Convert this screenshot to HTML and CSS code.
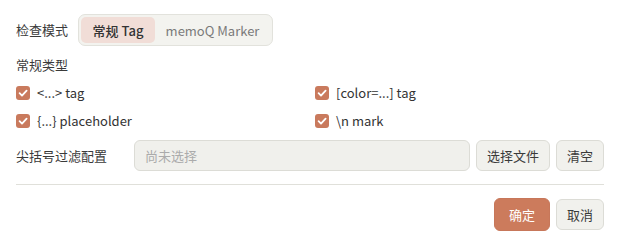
FILE: index.html
```html
<!DOCTYPE html>
<html lang="zh">
<head>
<meta charset="utf-8">
<link rel="stylesheet" href="styles.css">
</head>
<body>
<div class="dialog">
  <div class="mode-row">
    <span class="label">检查模式</span>
    <div class="segmented">
      <button class="seg active">常规 Tag</button>
      <button class="seg">memoQ Marker</button>
    </div>
  </div>
  <div class="section-title">常规类型</div>
  <div class="checks">
    <label class="check"><span class="box"><svg viewBox="0 0 14 14" width="14" height="14"><path d="M3.6 7.2 L6 9.6 L10.6 4.6" fill="none" stroke="#fff" stroke-width="1.8" stroke-linecap="round" stroke-linejoin="round"/></svg></span>&lt;...&gt; tag</label>
    <label class="check"><span class="box"><svg viewBox="0 0 14 14" width="14" height="14"><path d="M3.6 7.2 L6 9.6 L10.6 4.6" fill="none" stroke="#fff" stroke-width="1.8" stroke-linecap="round" stroke-linejoin="round"/></svg></span>[color=...] tag</label>
    <label class="check"><span class="box"><svg viewBox="0 0 14 14" width="14" height="14"><path d="M3.6 7.2 L6 9.6 L10.6 4.6" fill="none" stroke="#fff" stroke-width="1.8" stroke-linecap="round" stroke-linejoin="round"/></svg></span>{...} placeholder</label>
    <label class="check"><span class="box"><svg viewBox="0 0 14 14" width="14" height="14"><path d="M3.6 7.2 L6 9.6 L10.6 4.6" fill="none" stroke="#fff" stroke-width="1.8" stroke-linecap="round" stroke-linejoin="round"/></svg></span>\n mark</label>
  </div>
  <div class="file-row">
    <span class="label wide">尖括号过滤配置</span>
    <div class="input">尚未选择</div>
    <button class="btn">选择文件</button>
    <button class="btn">清空</button>
  </div>
  <div class="divider"></div>
  <div class="actions">
    <button class="btn primary">确定</button>
    <button class="btn">取消</button>
  </div>
</div>
</body>
</html>
```
FILE: styles.css
```css
* { box-sizing: border-box; }
html, body { margin: 0; background: #ffffff; }
body {
  font-family: "Noto Sans CJK SC", "Noto Sans", sans-serif;
  font-size: 13px;
  color: #3a3a3a;
}
.dialog {
  padding: 14px 16px 0 16px;
  display: flex;
  flex-direction: column;
}
.mode-row {
  display: flex;
  align-items: center;
  height: 32px;
}
.label {
  width: 62px;
  line-height: 20px;
}
.label.wide { width: 112px; }
.segmented {
  display: flex;
  padding: 2px;
  background: #f3f3ef;
  border: 1px solid #e2e2dc;
  border-radius: 7px;
  height: 32px;
  width: 195px;
}
.seg {
  font: inherit;
  border: none;
  background: transparent;
  color: #7a7a7a;
  border-radius: 5px;
  height: 100%;
  cursor: pointer;
}
.seg.active {
  background: #f1ddd7;
  color: #333;
  font-weight: 500;
  width: 74px;
  padding: 0;
}
.seg:not(.active) { flex: 1; padding: 0; }
.section-title {
  margin-top: 9px;
  line-height: 20px;
}
.checks {
  margin-top: 8px;
  display: grid;
  grid-template-columns: 1fr 1fr;
  column-gap: 10px;
  row-gap: 8px;
}
.check {
  display: flex;
  align-items: center;
  gap: 7px;
  line-height: 20px;
  color: #333;
}
.box {
  width: 14px;
  height: 14px;
  border-radius: 3px;
  background: #c97a5d;
  display: flex;
}
.file-row {
  margin-top: 9px;
  display: flex;
  align-items: center;
  gap: 6px;
}
.input {
  flex: 1;
  height: 31px;
  background: #f0f0ec;
  border: 1px solid #dcdcd6;
  border-radius: 6px;
  padding: 0 10px;
  line-height: 29px;
  color: #ababab;
}
.btn {
  font: inherit;
  height: 31px;
  padding: 0 10px;
  background: #f1f1ed;
  border: 1px solid #dcdcd6;
  border-radius: 6px;
  color: #3a3a3a;
  cursor: pointer;
}
.divider {
  margin-top: 13px;
  height: 1px;
  background: #e0e0da;
}
.actions {
  margin-top: 13px;
  display: flex;
  justify-content: flex-end;
  align-items: center;
  gap: 6px;
}
.btn.primary {
  height: 33px;
  width: 56px;
  background: #cc7b5c;
  border-color: #c7775a;
  color: #fff;
}
```
